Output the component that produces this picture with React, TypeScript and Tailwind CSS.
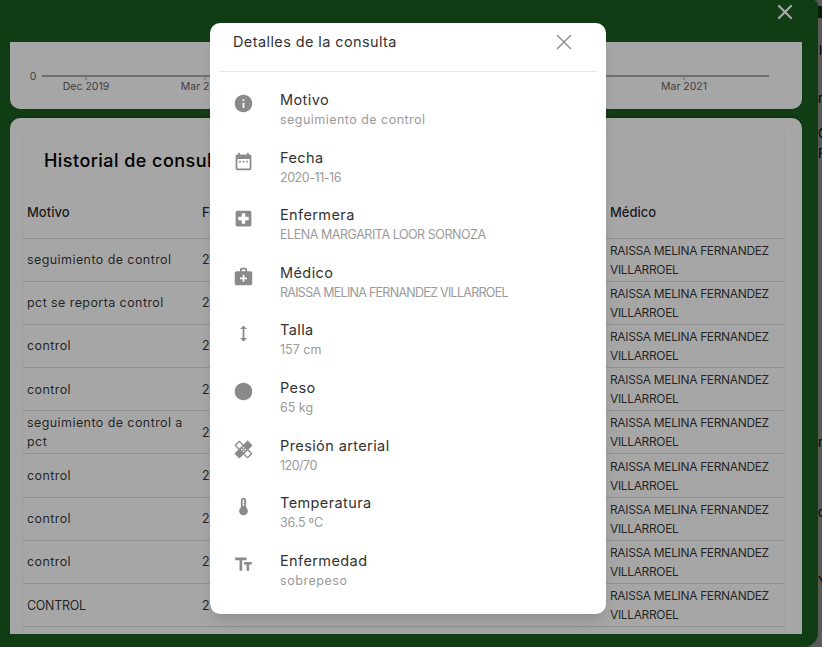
import { X } from "lucide-react";

const font = { fontFamily: "Inter, 'Noto Sans', sans-serif" };

const motivos = [
  { text: "seguimiento de control", track: "tracking-[0.42px]" },
  { text: "pct se reporta control", track: "tracking-[0.42px]" },
  { text: "control", track: "tracking-[0.42px]" },
  { text: "control", track: "tracking-[0.42px]" },
  { text: "seguimiento de control a pct", track: "tracking-[0.42px]" },
  { text: "control", track: "tracking-[0.42px]" },
  { text: "control", track: "tracking-[0.42px]" },
  { text: "control", track: "tracking-[0.42px]" },
  { text: "CONTROL", track: "tracking-[-0.3px]" },
];

const details = [
  { label: "Motivo", value: "seguimiento de control", icon: "info", track: "tracking-[0.47px]" },
  { label: "Fecha", value: "2020-11-16", icon: "date", track: "tracking-[-0.45px]" },
  { label: "Enfermera", value: "ELENA MARGARITA LOOR SORNOZA", icon: "hospital", track: "tracking-[-0.45px]" },
  { label: "Médico", value: "RAISSA MELINA FERNANDEZ VILLARROEL", icon: "medical", track: "tracking-[-0.72px]" },
  { label: "Talla", value: "157 cm", icon: "height", track: "tracking-[0px]" },
  { label: "Peso", value: "65 kg", icon: "circle", track: "tracking-[0px]" },
  { label: "Presión arterial", value: "120/70", icon: "healing", track: "tracking-[-0.5px]" },
  { label: "Temperatura", value: "36.5 ºC", icon: "thermo", track: "tracking-[-0.2px]" },
  { label: "Enfermedad", value: "sobrepeso", icon: "text", track: "tracking-[0.55px]" },
];

const iconPaths: Record<string, string> = {
  info: "M12 2C6.48 2 2 6.48 2 12s4.48 10 10 10 10-4.48 10-10S17.52 2 12 2zm1 15h-2v-6h2v6zm0-8h-2V7h2v2z",
  date: "M9 11H7v2h2v-2zm4 0h-2v2h2v-2zm4 0h-2v2h2v-2zm2-7h-1V2h-2v2H8V2H6v2H5c-1.11 0-1.99.9-1.99 2L3 20c0 1.1.89 2 2 2h14c1.1 0 2-.9 2-2V6c0-1.1-.9-2-2-2zm0 16H5V9h14v11z",
  hospital: "M19 3H5c-1.1 0-1.99.9-1.99 2L3 19c0 1.1.9 2 2 2h14c1.1 0 2-.9 2-2V5c0-1.1-.9-2-2-2zm-1 11h-4v4h-4v-4H6v-4h4V6h4v4h4v4z",
  medical: "M20 6h-4V4c0-1.1-.9-2-2-2h-4c-1.1 0-2 .9-2 2v2H4c-1.1 0-2 .9-2 2v12c0 1.1.9 2 2 2h16c1.1 0 2-.9 2-2V8c0-1.1-.9-2-2-2zM10 4h4v2h-4V4zm6 11h-3v3h-2v-3H8v-2h3v-3h2v3h3v2z",
  height: "M13 6.99h3L12 3 8 6.99h3v10.02H8L12 21l4-3.99h-3z",
  circle: "M12 2C6.48 2 2 6.48 2 12s4.48 10 10 10 10-4.48 10-10S17.52 2 12 2z",
  healing: "M17.73 12.02l3.98-3.98c.39-.39.39-1.02 0-1.41l-4.34-4.34c-.39-.39-1.02-.39-1.41 0l-3.98 3.98L8 2.29C7.8 2.1 7.55 2 7.29 2c-.25 0-.51.1-.7.29L2.25 6.63c-.39.39-.39 1.02 0 1.41l3.98 3.98L2.25 16c-.39.39-.39 1.02 0 1.41l4.34 4.34c.39.39 1.02.39 1.41 0l3.98-3.98 3.98 3.98c.2.2.45.29.71.29.26 0 .51-.1.71-.29l4.34-4.34c.39-.39.39-1.02 0-1.41l-3.98-3.98zM12 9c.55 0 1 .45 1 1s-.45 1-1 1-1-.45-1-1 .45-1 1-1zm-4.71 1.96L3.66 7.34l3.63-3.63 3.62 3.62-3.62 3.63zM10 13c-.55 0-1-.45-1-1s.45-1 1-1 1 .45 1 1-.45 1-1 1zm2 2c-.55 0-1-.45-1-1s.45-1 1-1 1 .45 1 1-.45 1-1 1zm2-4c.55 0 1 .45 1 1s-.45 1-1 1-1-.45-1-1 .45-1 1-1zm2.66 9.34l-3.63-3.62 3.63-3.63 3.62 3.62-3.62 3.63z",
  thermo: "M15 13V5c0-1.66-1.34-3-3-3S9 3.34 9 5v8c-1.21.91-2 2.37-2 4 0 2.76 2.24 5 5 5s5-2.24 5-5c0-1.63-.79-3.09-2-4zm-4-8c0-.55.45-1 1-1s1 .45 1 1h-1v1h1v2h-1v1h1v2h-2V5z",
  text: "M2.5 4v3h5v12h3V7h5V4h-13zm19 5h-9v3h3v7h3v-7h3V9z",
};

const DetailIcon = ({ name }: { name: string }) => (
  <svg viewBox="0 0 24 24" className="w-[21px] h-[21px] fill-[#8a8a8a]">
    <path d={iconPaths[name]} />
  </svg>
);

const ChartCard = () => (
  <div className="h-[67px] shrink-0 bg-white rounded-b-[10px]">
    <svg viewBox="0 0 792 67" className="w-[792px] h-[67px]">
      <line x1="32" y1="34" x2="759" y2="34" stroke="#aaa" strokeWidth="2" />
      <line x1="76" y1="34" x2="76" y2="38" stroke="#aaa" />
      <line x1="195" y1="34" x2="195" y2="38" stroke="#aaa" />
      <line x1="674" y1="34" x2="674" y2="38" stroke="#aaa" />
      <text x="23" y="38" fontSize="10.5" fill="#666" textAnchor="middle">0</text>
      <text x="76" y="48" fontSize="10.5" fill="#666" textAnchor="middle">Dec 2019</text>
      <text x="195" y="48" fontSize="10.5" fill="#666" textAnchor="middle">Mar 2020</text>
      <text x="674" y="48" fontSize="10.5" fill="#666" textAnchor="middle">Mar 2021</text>
    </svg>
  </div>
);

const HistoryCard = () => (
  <div className="mt-[9px] bg-white rounded-t-[10px] shadow-[0_0_3px_rgba(0,0,0,0.5)] px-3 pt-3 pb-6">
    <div className="w-[763px] border border-black/[0.03] pb-4">
      <h2 className="text-[18px] font-medium text-black pl-[21px] pt-[16px] h-[57px] tracking-[0.45px]">
        Historial de consultas
      </h2>
      <div className="grid grid-cols-[179px_404px_175px] h-[50.5px] items-center border-b border-[#e0e0e0] text-[13px] font-medium text-black/85">
        <span className="pl-[4px]">Motivo</span>
        <span>Fecha</span>
        <span className="pl-[4px]">Médico</span>
      </div>
      {motivos.map((m, i) => (
        <div
          key={i}
          className="grid grid-cols-[179px_404px_175px] h-[43.2px] items-center border-b border-[#e0e0e0] text-[12.5px] leading-[19px] text-black/80"
        >
          <span className={`pl-[4px] ${m.track}`}>{m.text}</span>
          <span>2020-11-16</span>
          <span className="pl-[4px] text-[12px] tracking-[-0.35px]">RAISSA MELINA FERNANDEZ VILLARROEL</span>
        </div>
      ))}
    </div>
  </div>
);

const DetailsModal = () => (
  <div className="absolute left-[210px] top-[23px] w-[396px] h-[591px] bg-white rounded-[10px] shadow-lg flex flex-col">
    <div className="mx-[9px] h-[49px] shrink-0 flex items-center justify-between border-b border-[#e8e8e8] pl-[14px] pr-[20px] pb-[10px]">
      <h3 className="text-[14.5px] text-[#333] tracking-[0.4px]">Detalles de la consulta</h3>
      <X size={26} strokeWidth={1.25} className="text-[#8a8a8a]" />
    </div>
    <ul className="pt-[9px]">
      {details.map((d) => (
        <li key={d.label} className="h-[57.6px] flex items-start pl-[23px]">
          <div className="w-[47px] pt-[12px] shrink-0">
            <DetailIcon name={d.icon} />
          </div>
          <div className="pt-[9px]">
            <div className="text-[14.5px] leading-[20px] text-[#333] tracking-[0.4px]">{d.label}</div>
            <div className={`text-[12.5px] leading-[20px] text-[#9a9a9a] ${d.track}`}>{d.value}</div>
          </div>
        </li>
      ))}
    </ul>
  </div>
);

export default function App() {
  return (
    <div className="relative w-[822px] h-[647px] overflow-hidden flex bg-[#8a8a8a]" style={font}>
      {/* green full screen dialog */}
      <div className="w-[818px] h-full shrink-0 bg-[#1b5e20] rounded-tr-[5px] rounded-br-[14px] flex flex-col overflow-hidden">
        <div className="h-[42px] shrink-0 flex justify-end items-start pr-[21px]">
          <X size={24} strokeWidth={2.25} className="text-white" />
        </div>
        <div className="h-[592px] w-[792px] ml-[10px] flex flex-col overflow-hidden">
          <ChartCard />
          <HistoryCard />
        </div>
      </div>

      {/* page behind the dialog */}
      <div className="w-[4px] shrink-0 overflow-hidden flex flex-col text-[13px] text-black">
        <div className="h-[6px]" />
        <div className="h-[12px] bg-[#1b5e20] brightness-50" />
        <div className="mt-[23px] pl-px">l</div>
        <div className="mt-[28px]">n</div>
        <div className="mt-[16px]">C</div>
        <div>F</div>
        <div className="mt-[270px]">n</div>
        <div className="mt-[50px]">c</div>
        <div className="mt-[50px]">Y</div>
      </div>

      {/* backdrop */}
      <div className="absolute inset-0 bg-black/35" />
      <DetailsModal />
    </div>
  );
}
